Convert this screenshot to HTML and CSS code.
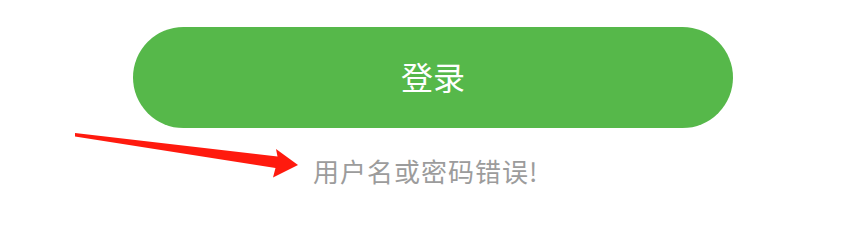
FILE: index.html
```html
<!DOCTYPE html>
<html lang="zh">
<head>
<meta charset="utf-8">
<link rel="stylesheet" href="styles.css">
</head>
<body>
<div class="page">
  <div class="form">
    <button class="login-btn" type="button">登录</button>
    <div class="msg-row">
      <p class="error-msg">用户名或密码错误!</p>
    </div>
  </div>
  <svg class="arrow" width="865" height="208" viewBox="0 0 865 208" xmlns="http://www.w3.org/2000/svg">
    <polygon fill="#ff1a0e" points="75,133 277.5,156.5 276,149 298,165 273,177.5 275.5,168 75,136.5"/>
  </svg>
</div>
</body>
</html>
```
FILE: styles.css
```css
html, body {
  margin: 0;
  padding: 0;
  background: #ffffff;
}
.page {
  position: relative;
  width: 865px;
  height: 208px;
  overflow: hidden;
  font-family: "Noto Sans CJK SC", "Noto Sans", sans-serif;
}
.form {
  padding: 27px 0 0 133px;
}
.login-btn {
  display: flex;
  align-items: center;
  justify-content: center;
  width: 600px;
  height: 101px;
  margin: 0;
  padding: 0 0 4px 0;
  border: none;
  border-radius: 51px;
  background: #56b84a;
  color: #ffffff;
  font-family: "Noto Sans CJK SC", sans-serif;
  font-size: 32px;
  line-height: 1;
  cursor: pointer;
}
.msg-row {
  padding: 0 0 0 180px;
}
.error-msg {
  margin: 27px 0 0 0;
  font-size: 26px;
  line-height: 32px;
  letter-spacing: 1px;
  color: #9c9c9c;
}
.arrow {
  position: absolute;
  left: 0;
  top: 0;
  pointer-events: none;
}
```
